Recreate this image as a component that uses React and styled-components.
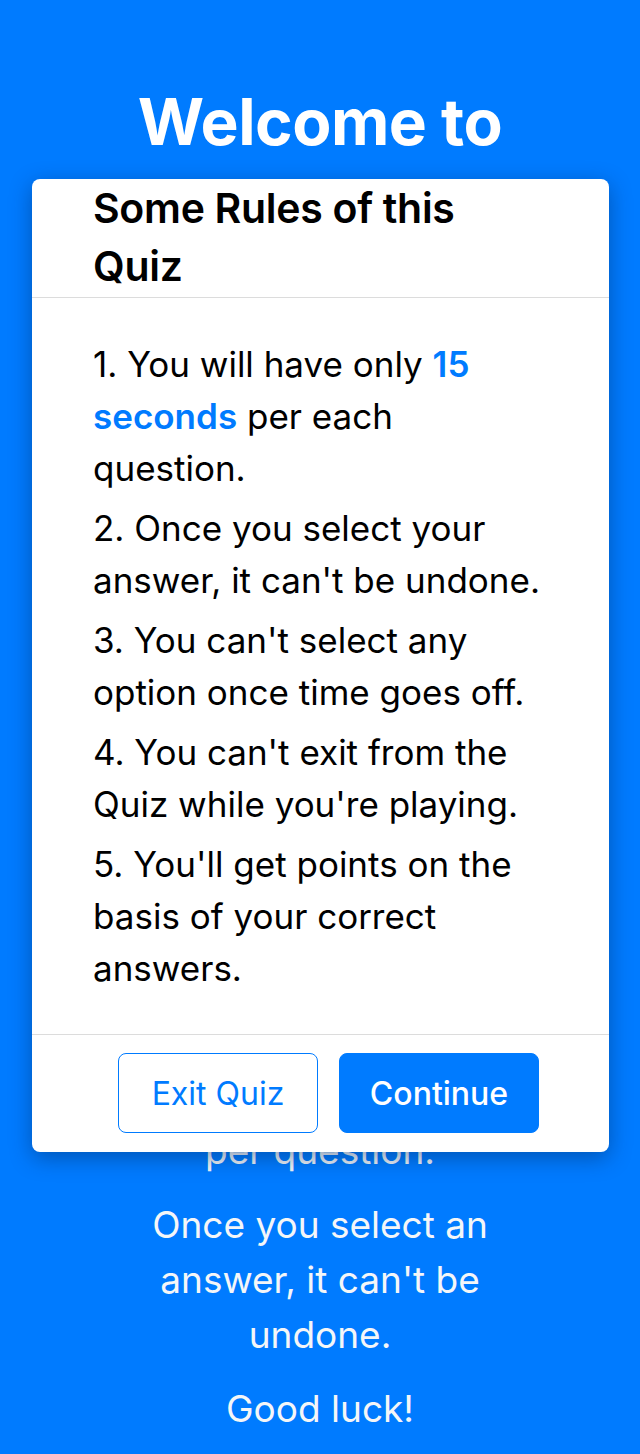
import React from "react"
import styled, { createGlobalStyle } from "styled-components"

const Global = createGlobalStyle`
  html, body {
    margin: 0;
    padding: 0;
    background-color: #007bff;
  }
  body {
    font-family: "Inter", "Noto Sans", sans-serif;
  }
`

const Page = styled.div`
  position: relative;
  min-height: 1454px;
  display: flex;
  flex-direction: column;
  align-items: center;
  padding: 74px 135px 18px;
  box-sizing: border-box;
  color: #f4f6f8;
  text-align: center;
`

const Heading = styled.h1`
  margin: 0 -40px;
  font-size: 64px;
  line-height: 96px;
  font-weight: 700;
  color: #ffffff;
  letter-spacing: -0.5px;
`

const Intro = styled.div`
  display: flex;
  flex-direction: column;
  gap: 19px;
  margin-top: auto;
`

const Para = styled.p`
  margin: 0;
  font-size: 37px;
  line-height: 55px;
  font-weight: 400;
`

const Modal = styled.div`
  position: absolute;
  top: 179px;
  left: 32px;
  width: 577px;
  background: #ffffff;
  border-radius: 8px;
  box-shadow: 0 6px 22px rgba(0, 40, 90, 0.45);
  text-align: left;
  color: #000;
  display: flex;
  flex-direction: column;
`

const ModalHeader = styled.div`
  padding: 0 90px 2px 61px;
  border-bottom: 1px solid #dcdcdc;
`

const Title = styled.h2`
  margin: 0;
  font-size: 41px;
  line-height: 58px;
  font-weight: 600;
  letter-spacing: -0.3px;
`

const ModalBody = styled.ol`
  list-style: none;
  margin: 0;
  padding: 40px 61px 40px;
  display: flex;
  flex-direction: column;
  gap: 8px;
`

const Rule = styled.li`
  font-size: 35px;
  line-height: 52px;
`

const Accent = styled.span`
  color: #007bff;
  font-weight: 600;
`

const ModalFooter = styled.div`
  border-top: 1px solid #dcdcdc;
  display: flex;
  justify-content: flex-end;
  gap: 21px;
  padding: 18px 70px 19px;
`

const Button = styled.button`
  width: 200px;
  height: 80px;
  border-radius: 8px;
  font-family: inherit;
  font-size: 32px;
  cursor: pointer;
  border: 1px solid #007bff;
  background: ${(p) => (p.$primary ? "#007bff" : "#ffffff")};
  color: ${(p) => (p.$primary ? "#ffffff" : "#007bff")};
  font-weight: ${(p) => (p.$primary ? 500 : 400)};
`

export default function App() {
  return (
    <>
      <Global />
      <Page>
        <Heading>Welcome to Quiz World</Heading>
        <Intro>
          <Para>You have 15 seconds per question.</Para>
          <Para>Once you select an answer, it can't be undone.</Para>
          <Para>Good luck!</Para>
        </Intro>
        <Modal>
          <ModalHeader>
            <Title>Some Rules of this Quiz</Title>
          </ModalHeader>
          <ModalBody>
            <Rule>
              1. You will have only <Accent>15 seconds</Accent> per each question.
            </Rule>
            <Rule>2. Once you select your answer, it can't be undone.</Rule>
            <Rule>3. You can't select any option once time goes off.</Rule>
            <Rule>4. You can't exit from the Quiz while you're playing.</Rule>
            <Rule>5. You'll get points on the basis of your correct answers.</Rule>
          </ModalBody>
          <ModalFooter>
            <Button>Exit Quiz</Button>
            <Button $primary>Continue</Button>
          </ModalFooter>
        </Modal>
      </Page>
    </>
  )
}
